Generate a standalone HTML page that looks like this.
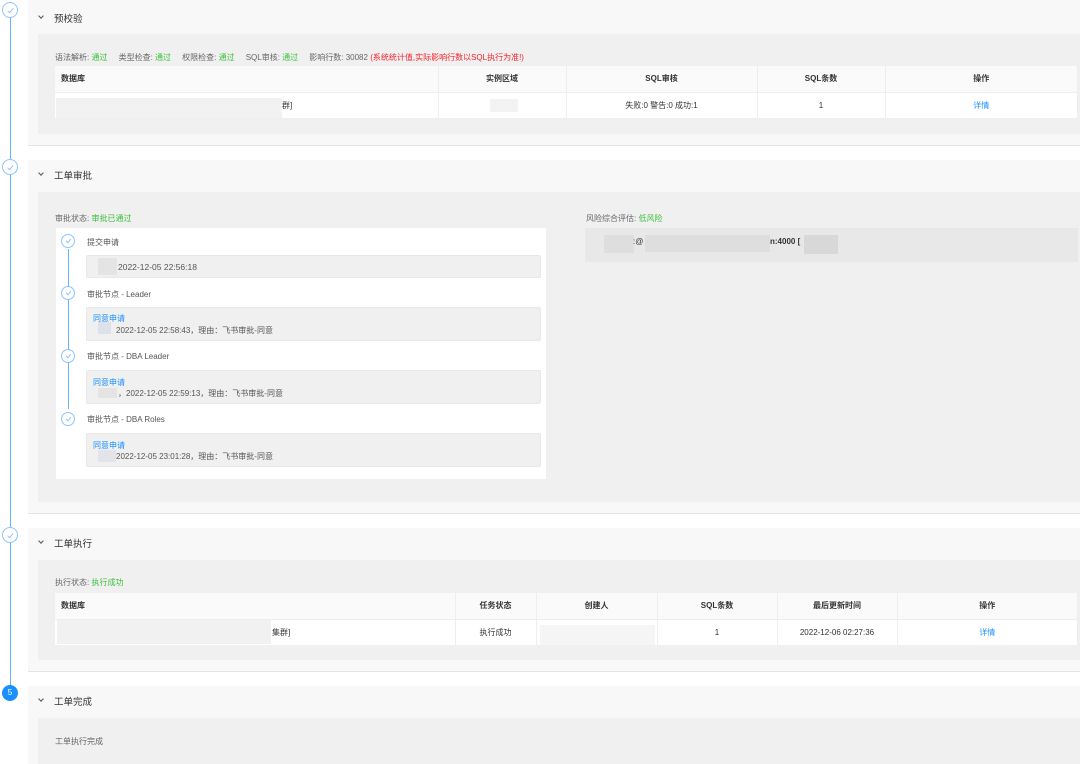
<!DOCTYPE html>
<html><head><meta charset="utf-8"><style>
*{margin:0;padding:0;box-sizing:border-box}
body{width:1080px;height:764px;overflow:hidden;background:#fff;font-family:"Liberation Sans","Noto Sans CJK SC",sans-serif;font-size:8px;color:#555;position:relative}
.a{position:absolute}
.panel{position:absolute;left:28px;right:0;background:#f8f8f8;border-bottom:1px solid #e4e4e4}
.box{position:absolute;left:38px;right:0;background:#f0f0f0}
.title{position:absolute;left:54px;font-size:9.5px;color:#333}
.chev{position:absolute;left:39px;width:4px;height:4px;border-right:1px solid #555;border-bottom:1px solid #555;transform:rotate(45deg)}
.g{color:#3bc13b}
.tbl{position:absolute;border-collapse:collapse;background:#fff;font-size:8px;color:#333}
.tbl th{background:#fafafa;font-weight:bold;color:#333;height:26px;border-right:1px solid #eee;border-bottom:1px solid #eee}
.tbl td{height:26px;text-align:center;border-right:1px solid #eee}
.link{color:#1890ff}
.c{position:absolute;width:16px;height:16px;border:1px solid #8cc4ff;border-radius:50%;background:#fff}
.c:after{content:"";position:absolute;left:5.5px;top:4px;width:2px;height:5px;border-right:1px solid #8cc4ff;border-bottom:1px solid #8cc4ff;transform:rotate(40deg)}
.cs{width:14px;height:14px}
.cs:after{left:4.5px;top:3px;width:2px;height:4px}
.blur{position:absolute;background:#ececec}
.gb{position:absolute;left:86px;width:455px;background:#f0f0f0;border:1px solid #e8e8e8;border-radius:2px}
</style></head><body>
<div class="a" style="left:10px;top:18px;width:1px;height:667px;background:#69b1ff"></div>
<div class="c" style="left:2px;top:2px"></div>
<div class="c" style="left:2px;top:159px"></div>
<div class="c" style="left:2px;top:527px"></div>
<div class="a" style="left:2px;top:685px;width:16px;height:16px;border-radius:50%;background:#1890ff;color:#fff;font-size:8px;text-align:center;line-height:16px">5</div>

<!-- section 1 -->
<div class="panel" style="top:0;height:146px"></div>
<div class="chev" style="top:14px"></div>
<div class="title" style="top:11px">预校验</div>
<div class="box" style="top:34px;height:100px"></div>
<div class="a" style="left:55px;top:52px;color:#666">语法解析: <span class="g">通过</span>&nbsp;&nbsp;&nbsp;&nbsp; 类型检查: <span class="g">通过</span>&nbsp;&nbsp;&nbsp;&nbsp; 权限检查: <span class="g">通过</span>&nbsp;&nbsp;&nbsp;&nbsp; SQL审核: <span class="g">通过</span>&nbsp;&nbsp;&nbsp;&nbsp; 影响行数: 30082 <span style="color:#f5222d">(系统统计值,实际影响行数以SQL执行为准!)</span></div>
<table class="tbl" style="left:55px;top:66px;width:1023px">
<tr><th style="width:383px;text-align:left;padding-left:6px">数据库</th><th style="width:128px">实例区域</th><th style="width:191px">SQL审核</th><th style="width:128px">SQL条数</th><th>操作</th></tr>
<tr><td style="text-align:left;padding-left:227px">群]</td><td></td><td>失败:0 警告:0 成功:1</td><td>1</td><td class="link">详情</td></tr>
</table>
<div class="blur" style="left:56px;top:98px;width:226px;height:20px;background:#f2f2f2"></div>
<div class="blur" style="left:490px;top:99px;width:28px;height:13px;background:#f3f3f3"></div>

<!-- section 2 -->
<div class="panel" style="top:160px;height:354px"></div>
<div class="chev" style="top:171px"></div>
<div class="title" style="top:168px">工单审批</div>
<div class="box" style="top:192px;height:310px"></div>
<div class="a" style="left:55px;top:213px;color:#666">审批状态: <span class="g">审批已通过</span></div>
<div class="a" style="left:56px;top:228px;width:490px;height:251px;background:#fff"></div>
<div class="a" style="left:68px;top:249px;width:1px;height:160px;background:#69b1ff"></div>
<div class="c cs" style="left:61px;top:234px"></div>
<div class="c cs" style="left:61px;top:286px"></div>
<div class="c cs" style="left:61px;top:349px"></div>
<div class="c cs" style="left:61px;top:412px"></div>
<div class="a" style="left:87px;top:237px">提交申请</div>
<div class="gb" style="top:255px;height:23px"></div>
<div class="blur" style="left:98px;top:258px;width:19px;height:17px;background:#e4e4e4"></div>
<div class="a" style="left:118px;top:262px;font-size:8.5px">2022-12-05 22:56:18</div>
<div class="a" style="left:87px;top:289px">审批节点 - Leader</div>
<div class="gb" style="top:307px;height:34px"></div>
<div class="a link" style="left:93px;top:313px">同意申请</div>
<div class="blur" style="left:98px;top:322px;width:13px;height:12px;background:#dde2ea"></div>
<div class="a" style="left:116px;top:325px">2022-12-05 22:58:43，理由：飞书审批-同意</div>
<div class="a" style="left:87px;top:351px">审批节点 - DBA Leader</div>
<div class="gb" style="top:370px;height:34px"></div>
<div class="a link" style="left:93px;top:377px">同意申请</div>
<div class="blur" style="left:98px;top:388px;width:19px;height:10px;background:#e4e4e4"></div>
<div class="a" style="left:118px;top:388px">，2022-12-05 22:59:13，理由：飞书审批-同意</div>
<div class="a" style="left:87px;top:414px">审批节点 - DBA Roles</div>
<div class="gb" style="top:433px;height:34px"></div>
<div class="a link" style="left:93px;top:440px">同意申请</div>
<div class="blur" style="left:98px;top:450px;width:18px;height:12px;background:#e2e4ea"></div>
<div class="a" style="left:116px;top:451px">2022-12-05 23:01:28，理由：飞书审批-同意</div>
<div class="a" style="left:586px;top:213px;color:#666">风险综合评估: <span class="g">低风险</span></div>
<div class="a" style="left:585px;top:228px;width:493px;height:34px;background:#e8e8e8"></div>
<div class="blur" style="left:604px;top:235px;width:30px;height:18px;background:#dedede"></div>
<div class="a" style="left:633px;top:237px;color:#333">:@</div>
<div class="blur" style="left:645px;top:235px;width:125px;height:17px;background:#dedede"></div>
<div class="a" style="left:770px;top:237px;color:#333;font-weight:bold">n:4000 [</div>
<div class="blur" style="left:804px;top:235px;width:34px;height:19px;background:#d8d8d8"></div>

<!-- section 3 -->
<div class="panel" style="top:528px;height:144px"></div>
<div class="chev" style="top:539px"></div>
<div class="title" style="top:536px">工单执行</div>
<div class="box" style="top:560px;height:100px"></div>
<div class="a" style="left:55px;top:577px;color:#666">执行状态: <span class="g">执行成功</span></div>
<table class="tbl" style="left:55px;top:593px;width:1023px">
<tr><th style="width:400px;text-align:left;padding-left:6px">数据库</th><th style="width:81px">任务状态</th><th style="width:121px">创建人</th><th style="width:120px">SQL条数</th><th style="width:120px">最后更新时间</th><th>操作</th></tr>
<tr><td style="text-align:left;padding-left:217px">集群]</td><td>执行成功</td><td></td><td>1</td><td>2022-12-06 02:27:36</td><td class="link">详情</td></tr>
</table>
<div class="blur" style="left:57px;top:620px;width:214px;height:24px;background:#f1f1f1"></div>
<div class="blur" style="left:540px;top:625px;width:115px;height:20px;background:#f5f5f5"></div>

<!-- section 4 -->
<div class="panel" style="top:686px;height:78px;border:none"></div>
<div class="chev" style="top:697px"></div>
<div class="title" style="top:694px">工单完成</div>
<div class="box" style="top:718px;height:46px"></div>
<div class="a" style="left:55px;top:736px;color:#666">工单执行完成</div>
</body></html>
